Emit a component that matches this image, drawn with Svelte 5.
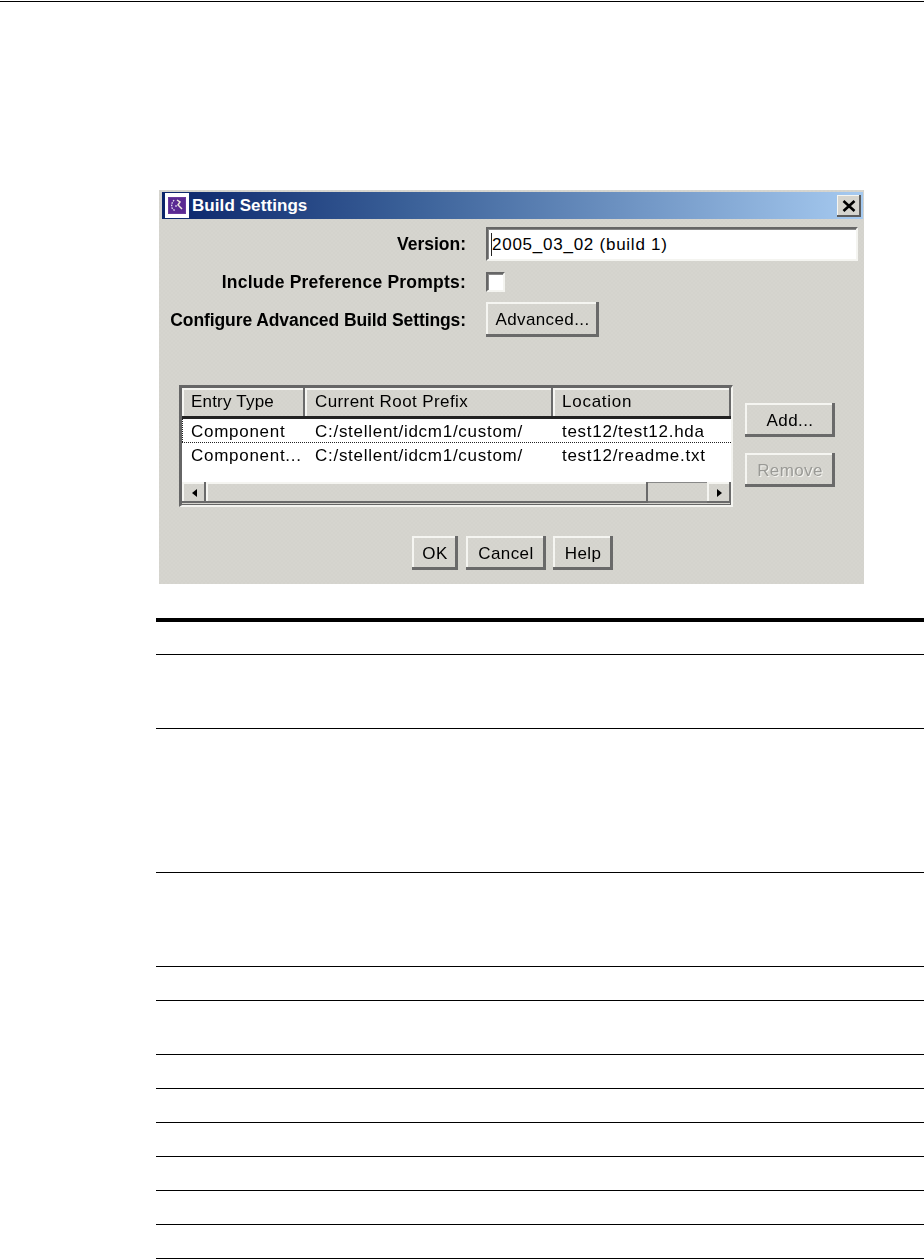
<script>
  const columns = [
    { title: 'Entry Type', cls: 'c1' },
    { title: 'Current Root Prefix', cls: 'c2' },
    { title: 'Location', cls: 'c3' }
  ];
  const rows = [
    ['Component', 'C:/stellent/idcm1/custom/', 'test12/test12.hda'],
    ['Component...', 'C:/stellent/idcm1/custom/', 'test12/readme.txt']
  ];
  const ruleHeights = [33, 74, 144, 94, 34, 54, 34, 34, 34, 34, 34, 34];
</script>

<div class="page">
  <div class="top-rule"></div>

  <section class="dialog">
    <header class="titlebar">
      <span class="app-icon">
        <svg width="18" height="17" viewBox="0 0 18 17">
          <rect width="18" height="17" fill="#6a3a9e" />
          <rect x="1" y="1" width="16" height="15" fill="#5a2a92" />
          <path d="M6 3 L3.5 7 L4 11 L7 14" stroke="#e4def0" stroke-width="1.3" stroke-dasharray="1.6 1.1" fill="none" />
          <path d="M9 3 L12 5 L10 8 L14 12" stroke="#efe9dc" stroke-width="1.5" fill="none" />
          <circle cx="8" cy="9" r="1" fill="#c4b2e2" />
        </svg>
      </span>
      <span class="title">Build Settings</span>
      <span class="close">
        <svg width="14" height="12" viewBox="0 0 14 12">
          <path d="M1.5 1 L12.5 11 M12.5 1 L1.5 11" stroke="#000" stroke-width="2.6" fill="none" />
        </svg>
      </span>
    </header>

    <div class="form">
      <span class="label">Version:</span>
      <div class="input"><span class="caret"></span><span class="value">2005_03_02 (build 1)</span></div>
      <span class="label include">Include Preference Prompts:</span>
      <div class="checkbox"></div>
      <span class="label configure">Configure Advanced Build Settings:</span>
      <div class="btn advanced">Advanced...</div>
    </div>

    <div class="middle">
      <div class="table">
        <div class="thead">
          {#each columns as col}
            <div class="th {col.cls}">{col.title}</div>
          {/each}
        </div>
        <div class="tbody">
          {#each rows as row, i}
            <div class="tr" class:selected={i === 0}>
              {#each row as cell, j}
                <div class="td {columns[j].cls}">{cell}</div>
              {/each}
            </div>
          {/each}
        </div>
        <div class="scrollbar">
          <span class="sb-btn"><svg width="5" height="8" viewBox="0 0 5 8"><path d="M5 0 V8 L0 4 Z" fill="#000" /></svg></span>
          <span class="sb-thumb"></span>
          <span class="sb-track"></span>
          <span class="sb-btn"><svg width="5" height="8" viewBox="0 0 5 8"><path d="M0 0 V8 L5 4 Z" fill="#000" /></svg></span>
        </div>
      </div>
      <div class="side">
        <div class="btn add">Add...</div>
        <div class="btn remove">Remove</div>
      </div>
    </div>

    <div class="actions">
      <div class="btn ok">OK</div>
      <div class="btn cancel">Cancel</div>
      <div class="btn help">Help</div>
    </div>
  </section>

  <div class="rules">
    {#each ruleHeights as h}
      <div class="rule" style="height: {h}px"></div>
    {/each}
  </div>
</div>

<style>
  :global(body) {
    margin: 0;
    background: #fff;
  }
  .page {
    width: 924px;
    height: 1259px;
    overflow: hidden;
    font-family: "Liberation Sans", Arial, sans-serif;
  }
  .top-rule {
    height: 1px;
    margin-top: 1px;
    background: #000;
  }
  .dialog {
    width: 705px;
    height: 394px;
    margin: 188px 0 34px 159px;
    box-sizing: border-box;
    padding-top: 2px;
    background: repeating-conic-gradient(#d6d5cf 0 25%, #d4d3cd 0 50%) 0 0 / 4px 4px;
    color: #000;
    font-size: 17px;
    filter: blur(0.55px);
  }
  .titlebar {
    display: flex;
    align-items: center;
    height: 27px;
    margin: 0 1px 0 3px;
    background: linear-gradient(90deg, #0a246a 0%, #3a6098 35%, #a6caf0 100%);
  }
  .app-icon {
    display: flex;
    align-items: center;
    justify-content: center;
    width: 24px;
    height: 25px;
    margin-left: 3px;
    background: #fff;
  }
  .title {
    margin-left: 3px;
    color: #fff;
    font-weight: 700;
    font-size: 17px;
    letter-spacing: 0.08px;
  }
  .close {
    display: flex;
    align-items: center;
    justify-content: center;
    width: 24px;
    height: 22px;
    margin-left: auto;
    margin-right: 2px;
    background: #d5d4ce;
    box-shadow: inset -2px -2px 0 #5c5c5c, inset 1px 1px 0 #f5f5f1;
  }
  .form {
    display: grid;
    grid-template-columns: 307px 372px;
    grid-template-rows: 35px 20px 35px;
    column-gap: 20px;
    row-gap: 10px;
    margin-top: 8px;
    align-items: start;
  }
  .label {
    align-self: center;
    text-align: right;
    font-weight: 700;
    font-size: 17.5px;
    white-space: nowrap;
  }
  .include {
    letter-spacing: 0.22px;
  }
  .configure {
    padding-top: 1px;
    letter-spacing: -0.09px;
  }
  .input {
    position: relative;
    display: flex;
    align-items: center;
    height: 34px;
    box-sizing: border-box;
    padding: 1px 0 0 4px;
    background: #fff;
    border: 2px solid;
    border-color: #666 #f4f4f0 #f4f4f0 #666;
    box-shadow: inset 1px 1px 0 #888;
  }
  .caret {
    position: absolute;
    left: 3px;
    top: 4px;
    bottom: 3px;
    width: 1px;
    background: #222;
  }
  .value {
    font-size: 17px;
    letter-spacing: 0.75px;
  }
  .checkbox {
    width: 19px;
    height: 20px;
    box-sizing: border-box;
    background: #fff;
    border: 2px solid;
    border-color: #666 #f4f4f0 #f4f4f0 #666;
    box-shadow: inset 1px 1px 0 #888;
  }
  .btn {
    display: flex;
    align-items: center;
    justify-content: center;
    box-sizing: border-box;
    height: 34px;
    padding-top: 1px;
    color: #000;
    font-size: 17px;
    letter-spacing: 0.4px;
    box-shadow: inset -3px -3px 0 #6a6a6a, inset 2px 2px 0 #f5f5f1;
  }
  .advanced {
    width: 113px;
    height: 35px;
  }
  .middle {
    display: flex;
    align-items: flex-start;
    margin: 48px 0 0 20px;
  }
  .table {
    display: flex;
    flex-direction: column;
    width: 554px;
    height: 122px;
    box-sizing: border-box;
    border-top: 3px solid #666;
    border-left: 3px solid #666;
    border-bottom: 2px solid #f4f4f0;
    border-right: 2px solid #f4f4f0;
    box-shadow: inset -1px -1px 0 #666;
  }
  .thead {
    display: grid;
    grid-template-columns: 123px 248px 178px;
    height: 28px;
    flex: none;
  }
  .th {
    display: flex;
    align-items: center;
    box-sizing: border-box;
    padding-bottom: 1px;
    box-shadow: inset -2px 0 0 #6a6a6a, inset 2px 2px 0 #f5f5f1;
    white-space: nowrap;
  }
  .th.c1 {
    letter-spacing: 0.2px;
  }
  .th.c2 {
    letter-spacing: 0.4px;
  }
  .th.c3 {
    letter-spacing: 0.75px;
  }
  .tbody {
    flex: none;
    height: 66px;
    border-top: 3px solid #222;
    box-sizing: border-box;
    background: #fff;
  }
  .tr {
    display: grid;
    grid-template-columns: 123px 248px 178px;
    height: 24px;
    padding-top: 2px;
    box-sizing: border-box;
    align-items: center;
  }
  .tr.selected {
    border-bottom: 1px dotted #222;
    background: repeating-linear-gradient(#222 0 1px, transparent 1px 2px) left top / 1px 100% no-repeat;
  }
  .c1 {
    padding-left: 9px;
  }
  .c2 {
    padding-left: 10px;
  }
  .c3 {
    padding-left: 9px;
  }
  .td {
    letter-spacing: 0.72px;
    white-space: nowrap;
  }
  .scrollbar {
    display: flex;
    flex: none;
    height: 21px;
  }
  .sb-btn {
    display: flex;
    flex: none;
    align-items: center;
    justify-content: center;
    width: 24px;
    box-shadow: inset -2px -2px 0 #6a6a6a, inset 2px 2px 0 #f5f5f1;
  }
  .sb-thumb {
    flex: none;
    width: 442px;
    box-shadow: inset -2px -2px 0 #6a6a6a, inset 2px 2px 0 #f5f5f1;
  }
  .sb-track {
    flex: 1;
    border-top: 1px solid #888;
    border-bottom: 2px solid #777;
  }
  .side {
    display: flex;
    flex-direction: column;
    gap: 16px;
    width: 90px;
    margin-left: 12px;
    padding-top: 18px;
  }
  .remove {
    color: #9a9a96;
    text-shadow: 1px 1px 0 #f5f5f1;
  }
  .actions {
    display: flex;
    margin: 29px 0 0 253px;
  }
  .ok {
    width: 46px;
    margin-right: 8px;
  }
  .cancel {
    width: 80px;
    margin-right: 7px;
  }
  .help {
    width: 60px;
  }
  .rules {
    margin-left: 156px;
    border-top: 4px solid #000;
  }
  .rule {
    box-sizing: border-box;
    border-bottom: 1px solid #000;
  }
</style>
